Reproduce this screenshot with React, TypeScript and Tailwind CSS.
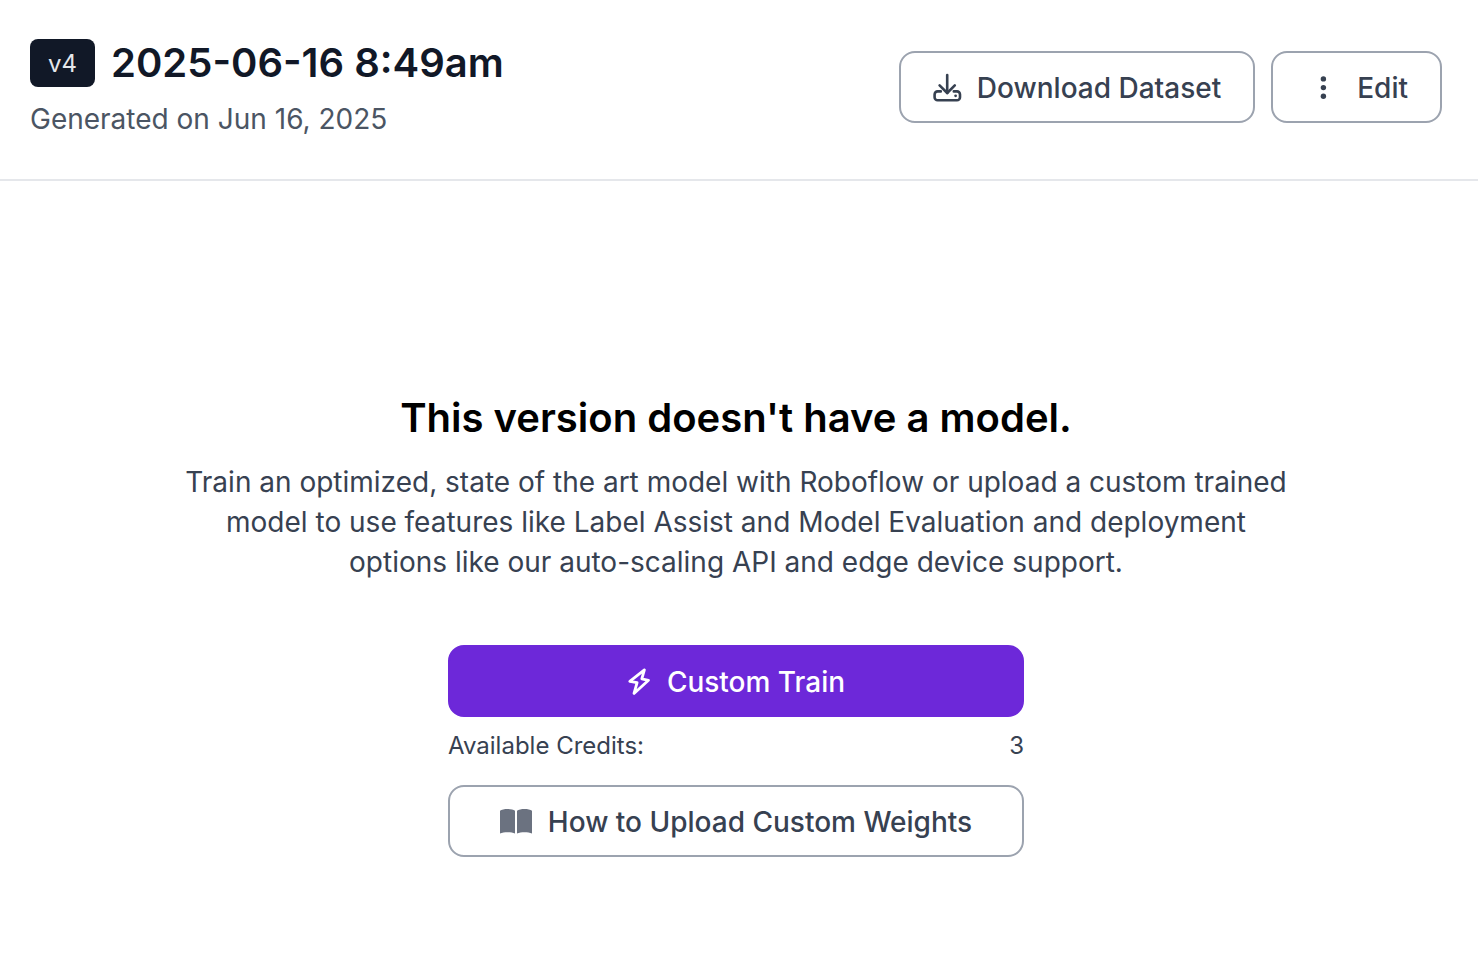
import * as React from "react";
import clsx from "clsx";

function DownloadIcon() {
  return (
    <svg
      aria-hidden="true"
      viewBox="0 0 28 28"
      className="h-7 w-7 shrink-0 overflow-visible"
      fill="none"
      stroke="currentColor"
      strokeWidth="2.6"
      strokeLinecap="round"
      strokeLinejoin="round"
    >
      <path d="M14.2 1v18" />
      <path d="M6.6 11.4l7.600 7.600 7.600-7.600" />
      <path d="M7.800 17.400H4.600a3 3 0 0 0-3 3v2.800a3 3 0 0 0 3 3h19.400a3 3 0 0 0 3-3v-2.800a3 3 0 0 0-3-3h-3.200" />
      <circle cx="22.600" cy="21.800" r="1.400" fill="currentColor" stroke="none" />
    </svg>
  );
}

function DotsIcon() {
  return (
    <svg aria-hidden="true" viewBox="0 0 36 28" className="h-7 w-9 shrink-0" fill="currentColor">
      <circle cx="18.4" cy="4.9" r="2.7" />
      <circle cx="18.4" cy="13.6" r="2.7" />
      <circle cx="18.4" cy="22.3" r="2.7" />
    </svg>
  );
}

function BoltIcon() {
  return (
    <svg
      aria-hidden="true"
      viewBox="0 0 24 28"
      className="h-7 w-6 shrink-0"
      fill="none"
      stroke="currentColor"
      strokeWidth="2.8"
      strokeLinecap="round"
      strokeLinejoin="round"
    >
      <path d="M17.4 1.9L2.8 13.3l7.3 1.3-3.1 10.9L21.5 12.3l-6.7-1.4z" />
    </svg>
  );
}

function BookIcon() {
  return (
    <svg aria-hidden="true" viewBox="0 0 32 24" className="h-6 w-8 shrink-0 overflow-visible text-[#6b7280]" fill="currentColor">
      <path d="M0 .7C3-1.5 12-1.5 15 .7v22.700c-4-1.600-11-1.600-15 0z" />
      <path d="M17 .7C20-1.500 29-1.500 32 .7v22.700c-4-1.600-11-1.600-15 0z" />
    </svg>
  );
}

type ButtonProps = React.ButtonHTMLAttributes<HTMLButtonElement> & {
  variant?: "primary" | "outline";
};

function Button({ variant = "outline", className, children, ...rest }: ButtonProps) {
  return (
    <button
      type="button"
      {...rest}
      className={clsx(
        "flex h-18 items-center justify-center gap-4 rounded-2xl border-2 px-8 pt-0.5 text-[28px] leading-10 font-medium whitespace-nowrap focus-visible:outline-none focus-visible:ring-2 focus-visible:ring-violet-500 focus-visible:ring-offset-2",
        variant === "primary"
          ? "border-[#6d28d9] bg-[#6d28d9] text-white hover:bg-[#5b21b6]"
          : "border-[#9ca3af] bg-white text-[#374151] hover:bg-gray-50",
        className
      )}
    >
      {children}
    </button>
  );
}

export default function App() {
  return (
    <div className="min-h-screen bg-white font-[Inter,sans-serif]">
      <header className="flex flex-wrap items-center justify-between gap-4 border-b-2 border-[#e5e7eb] pt-[35px] pr-9 pb-10 pl-[30px]">
        <div>
          <div className="flex items-center gap-4">
            <span className="flex h-12 items-center rounded-lg bg-[#111827] px-[18px] pt-0.5 text-2xl text-[#e5e7eb]">
              v4
            </span>
            <h1 className="text-[40px] leading-14 font-semibold text-[#111827]">2025-06-16 8:49am</h1>
          </div>
          <p className="mt-2 text-[28px] leading-10 text-[#4b5563]">Generated on Jun 16, 2025</p>
        </div>
        <div className="flex gap-4">
          <Button>
            <DownloadIcon />
            Download Dataset
          </Button>
          <Button>
            <DotsIcon />
            Edit
          </Button>
        </div>
      </header>

      <main className="flex flex-col items-center pt-[209px] pr-9 pb-16 pl-[30px] text-center">
        <h2 className="text-[40px] leading-14 font-semibold text-black">
          This version doesn&apos;t have a model.
        </h2>
        <p className="mt-4 max-w-[1120px] text-[28px] leading-10 text-[#374151]">
          Train an optimized, state of the art model with Roboflow or upload a custom trained model to use
          features like Label Assist and Model Evaluation and deployment options like our auto-scaling API
          and edge device support.
        </p>
        <div className="mt-[63px] w-full max-w-xl">
          <Button variant="primary" className="w-full">
            <BoltIcon />
            Custom Train
          </Button>
          <div className="mt-[13px] mb-[23px] flex justify-between text-2xl text-[#374151]">
            <span>Available Credits:</span>
            <span>3</span>
          </div>
          <Button className="w-full">
            <BookIcon />
            How to Upload Custom Weights
          </Button>
        </div>
      </main>
    </div>
  );
}
